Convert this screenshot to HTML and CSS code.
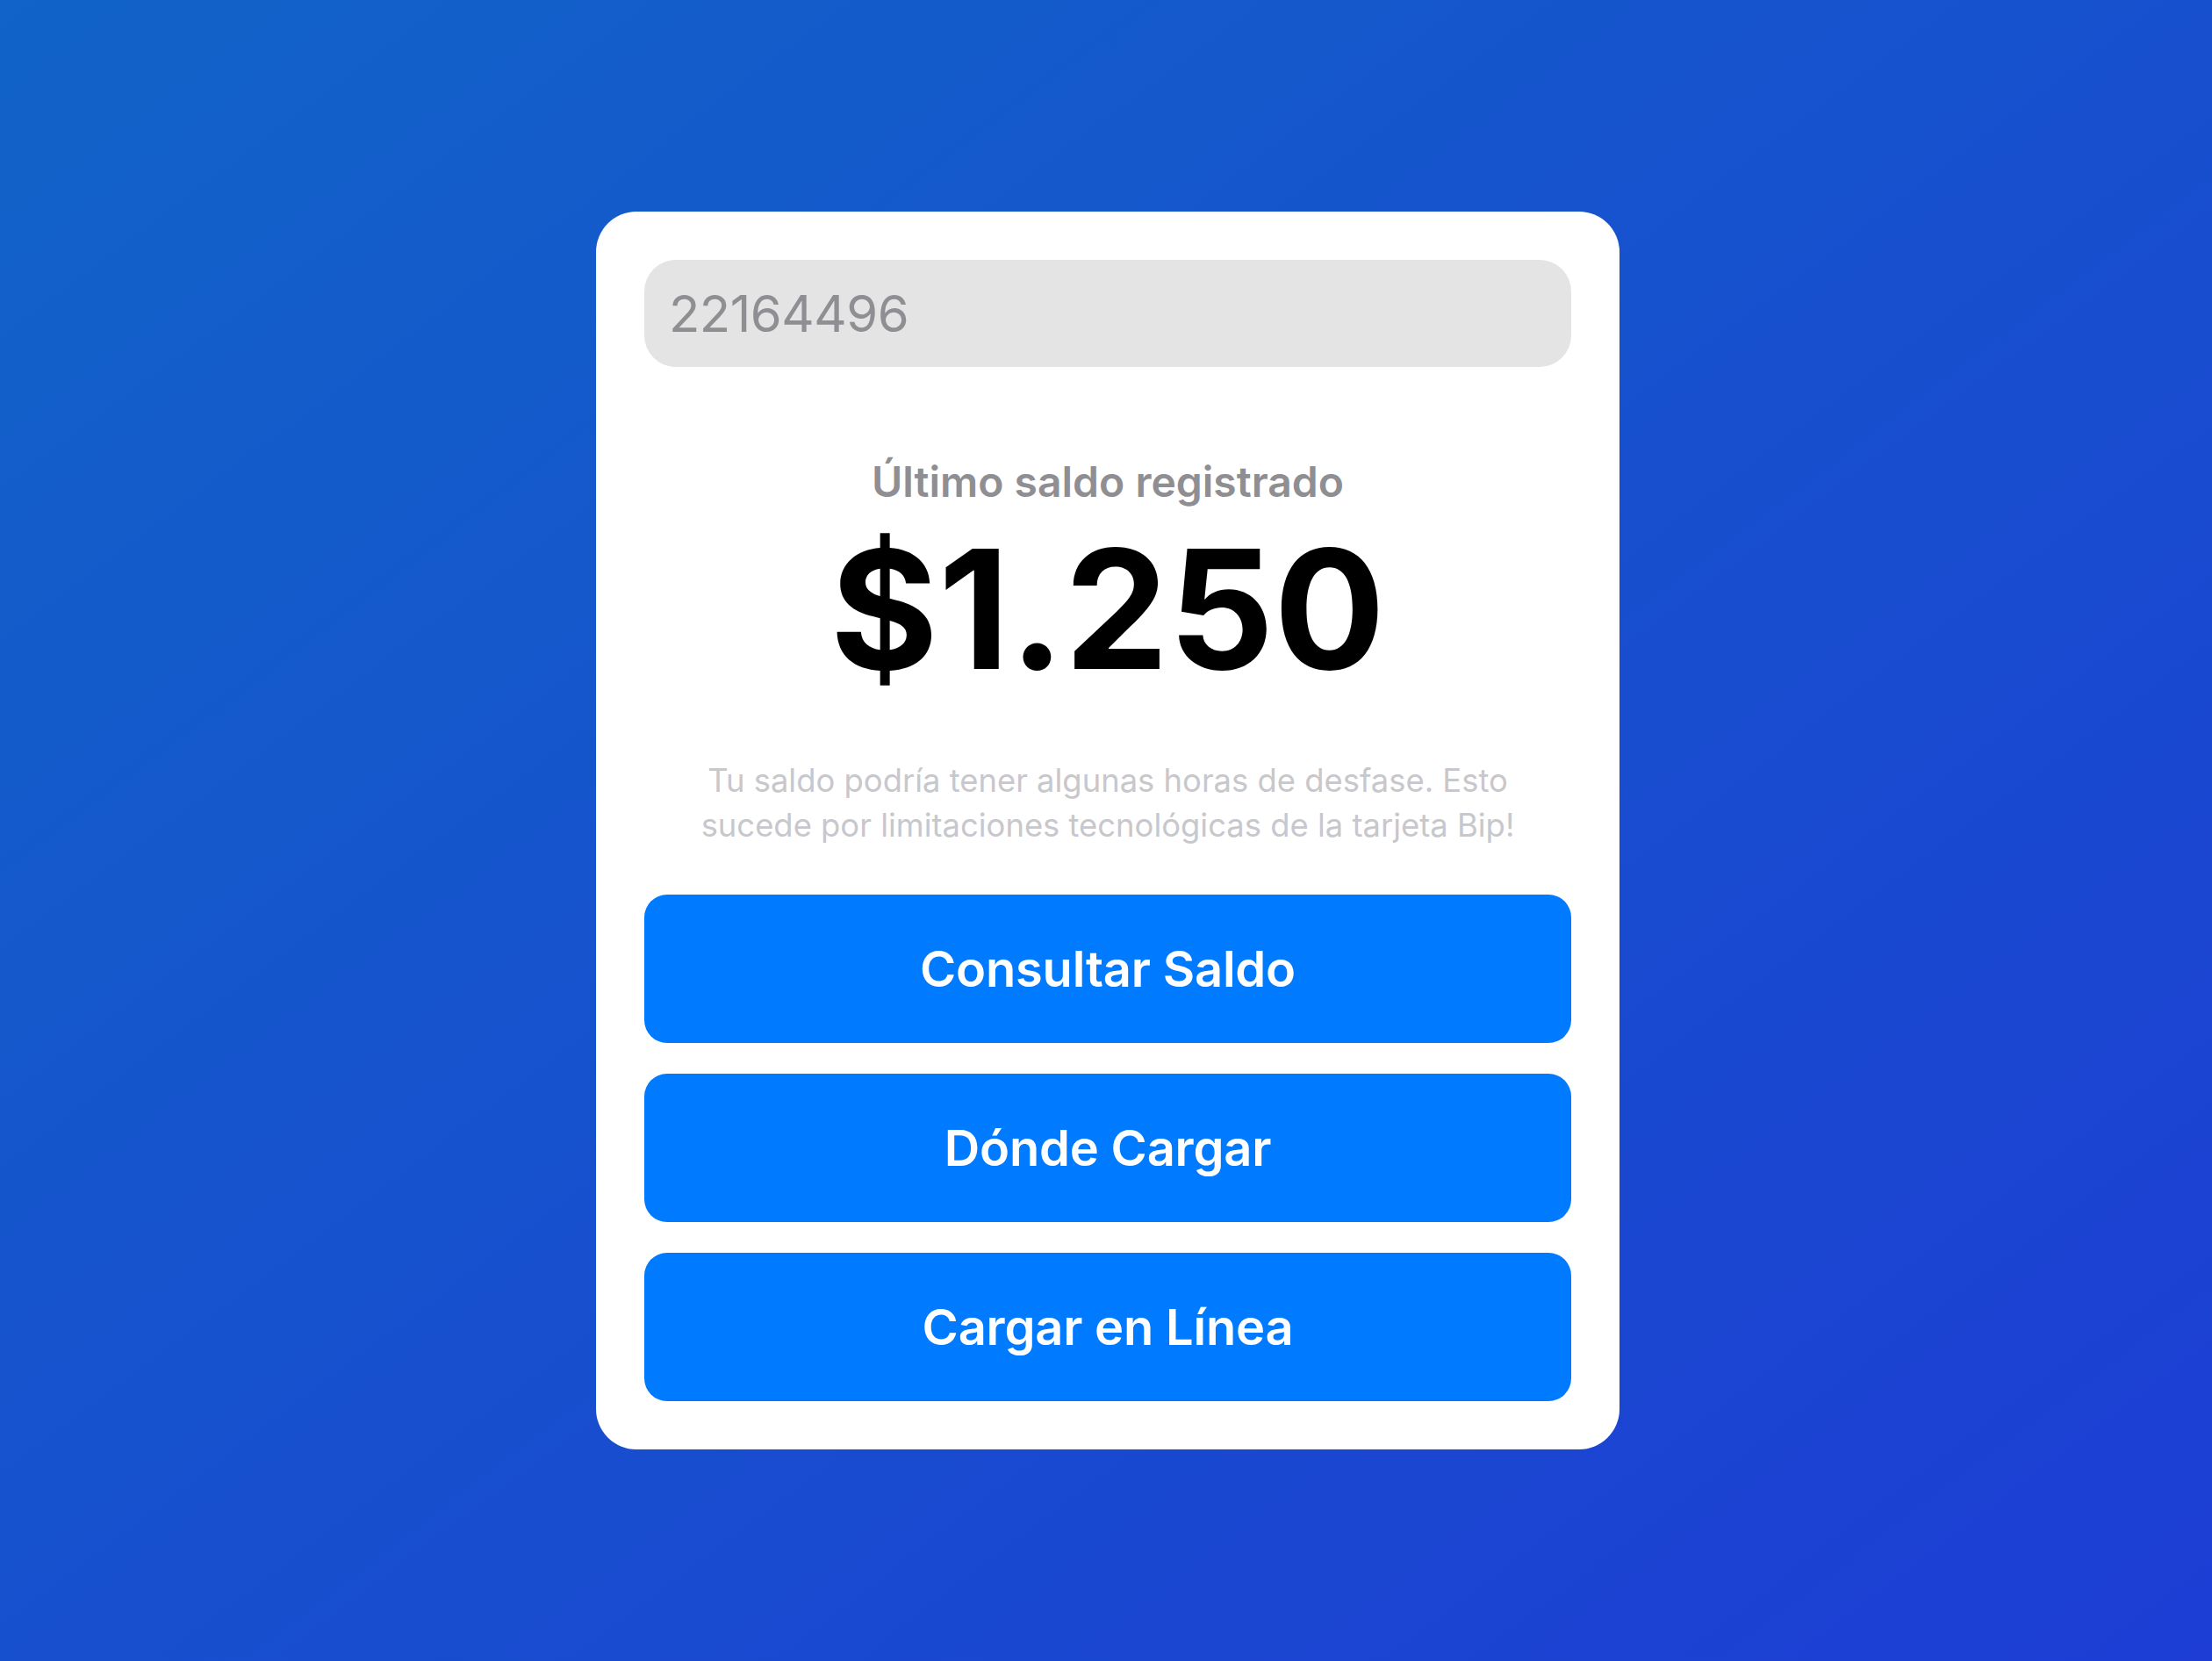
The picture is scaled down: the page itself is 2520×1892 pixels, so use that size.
FILE: index.html
```html
<!DOCTYPE html>
<html lang="es">
<head>
<meta charset="UTF-8">
<meta name="viewport" content="width=device-width, initial-scale=1.0">
<title>Saldo Bip!</title>
<link rel="stylesheet" href="styles.css">
</head>
<body>
<div class="card">
    <input class="card-number" type="text" value="22164496" inputmode="numeric">

    <p class="balance-label">Último saldo registrado</p>
    <p class="balance-amount">$1.250</p>

    <p class="balance-note">Tu saldo podría tener algunas horas de desfase. Esto sucede por limitaciones tecnológicas de la tarjeta Bip!</p>

    <div class="actions">
        <button class="action">Consultar Saldo</button>
        <button class="action">Dónde Cargar</button>
        <button class="action">Cargar en Línea</button>
    </div>
</div>
</body>
</html>
```

FILE: styles.css
```css
html, body {
    height: 100%;
}
body {
    margin: 0;
    padding-left: 4px;
    font-family: 'Inter', 'Noto Sans', sans-serif;
    background: linear-gradient(to bottom right, #1163c8, #1d3dd4);
    display: flex;
    align-items: center;
    justify-content: center;
}
.card {
    width: 1056px;
    padding: 55px;
    background-color: #fff;
    border-radius: 46px;
    display: flex;
    flex-direction: column;
    align-items: center;
}
.card-number {
    box-sizing: border-box;
    width: 100%;
    height: 122px;
    margin: 0;
    padding: 0 28px;
    border: none;
    border-radius: 36px;
    background-color: #e4e4e4;
    color: #8e8e93;
    font-family: inherit;
    font-size: 58px;
    letter-spacing: -0.5px;
    outline: none;
}
.balance-label {
    margin: 103px 0 0;
    font-size: 48px;
    line-height: 56px;
    font-weight: 600;
    color: #8e8e93;
}
.balance-amount {
    margin: 23px 0 0;
    font-size: 188px;
    line-height: 1;
    font-weight: 700;
    color: #000;
}
.balance-note {
    max-width: 960px;
    margin: 76px 0 0;
    font-size: 36.4px;
    line-height: 51px;
    font-weight: 400;
    text-align: center;
    color: #c7c7cc;
}
.actions {
    width: 100%;
    margin-top: 53px;
    display: flex;
    flex-direction: column;
    gap: 35px;
}
.action {
    height: 169px;
    border: none;
    border-radius: 26px;
    background-color: #007aff;
    color: #fff;
    font-family: inherit;
    font-size: 56px;
    font-weight: 600;
    letter-spacing: -0.2px;
    cursor: pointer;
}
.action:hover {
    background-color: #006ee6;
}
```
